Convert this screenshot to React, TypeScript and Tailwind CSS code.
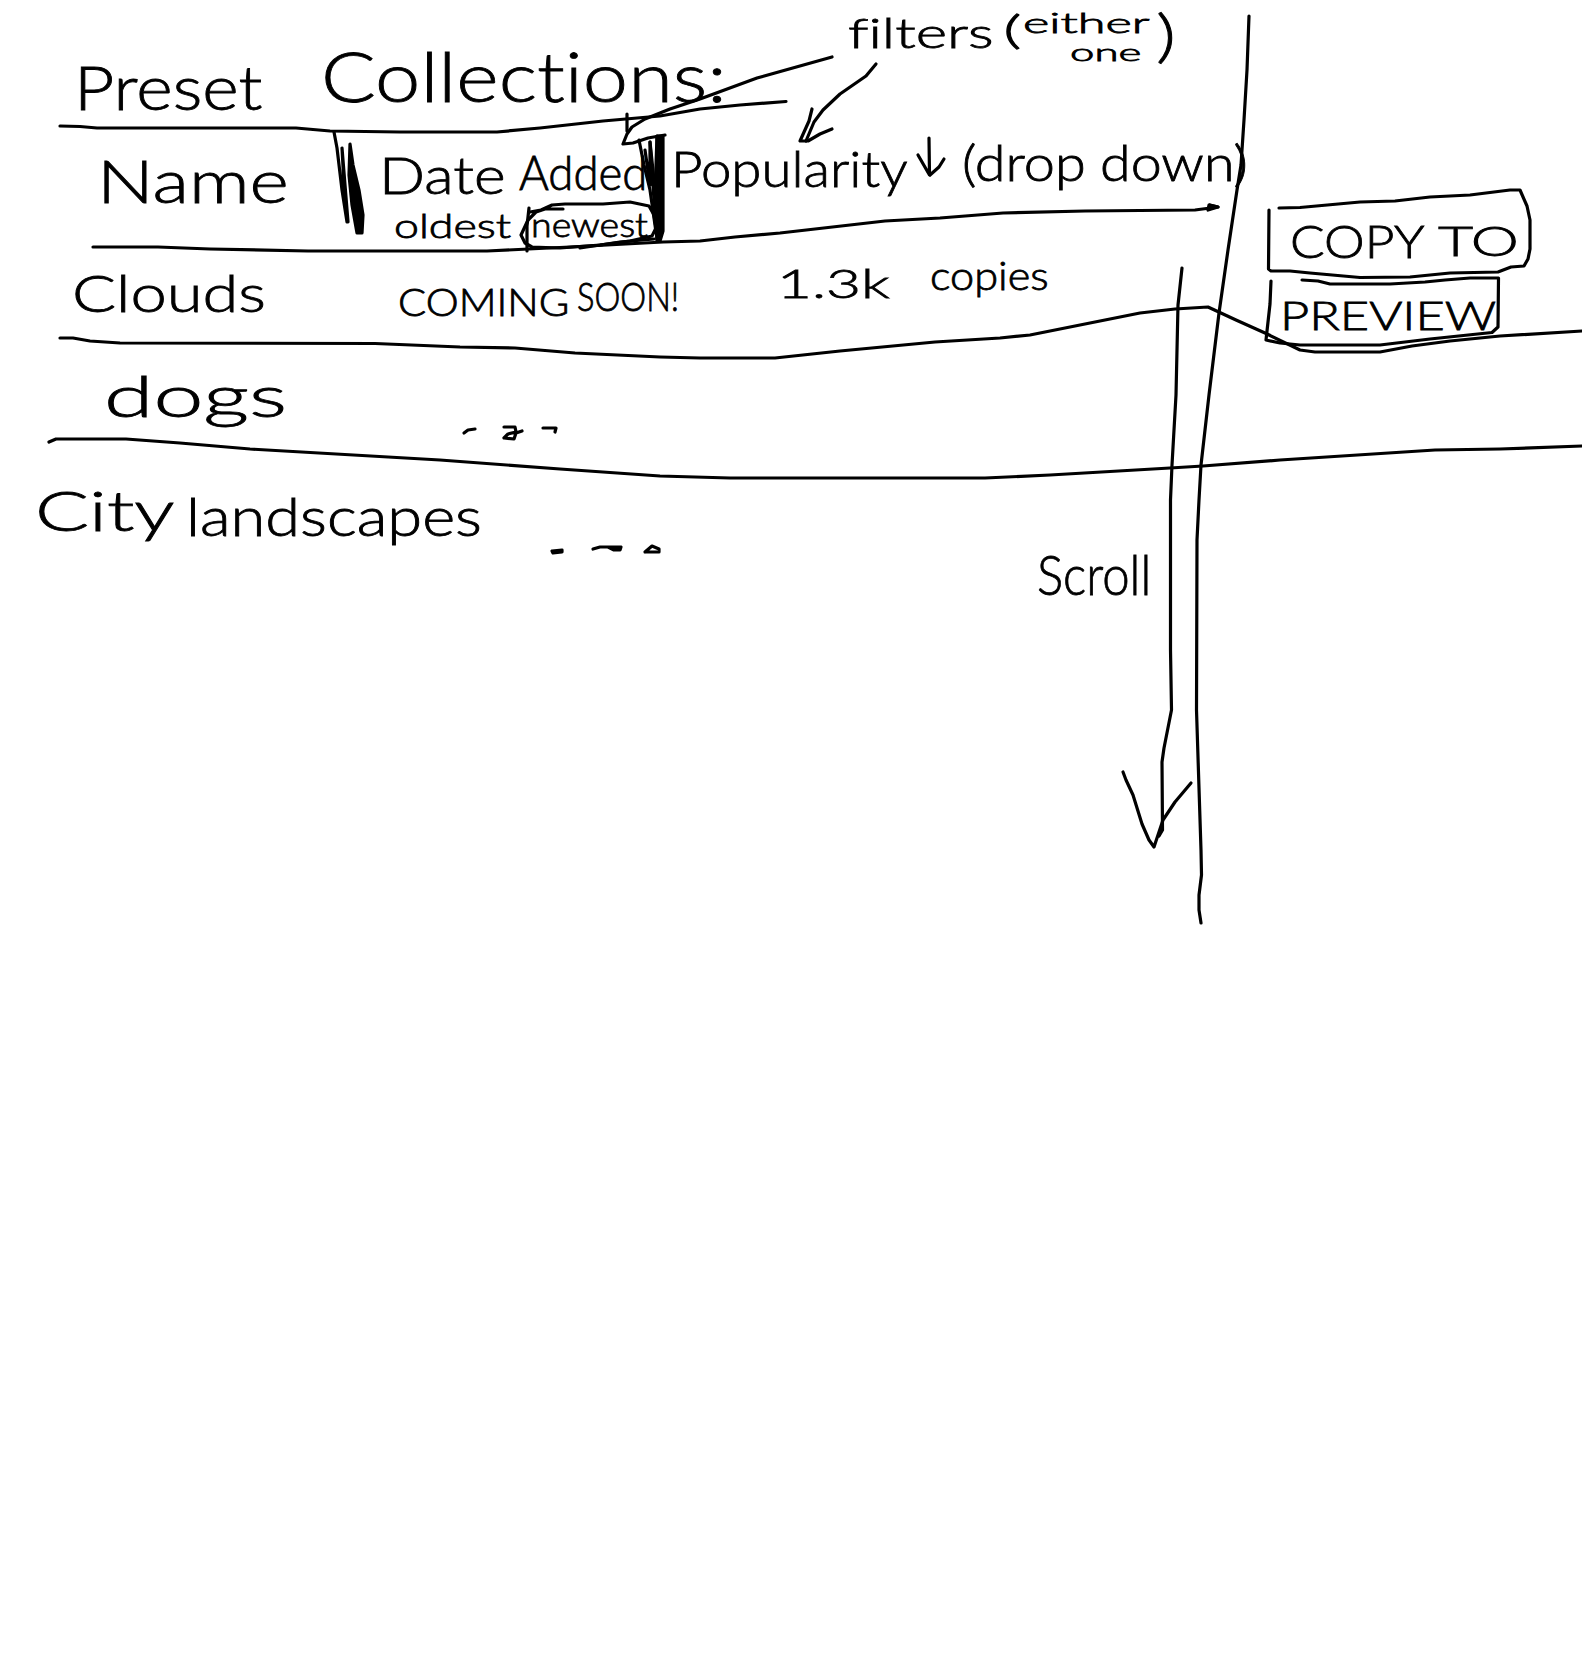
import { useLayoutEffect, useRef, useState } from "react";

/** A word stretched horizontally to fill the box its className gives it. */
function Word({ text, className }: { text: string; className: string }) {
  const box = useRef<HTMLDivElement>(null);
  const ink = useRef<HTMLSpanElement>(null);
  const [scale, setScale] = useState(1);
  useLayoutEffect(() => {
    if (box.current && ink.current) {
      setScale(box.current.offsetWidth / ink.current.offsetWidth);
    }
  }, [text]);
  return (
    <div ref={box} className={`shrink-0 text-left leading-none whitespace-nowrap ${className}`}>
      <span
        ref={ink}
        className="inline-block origin-left align-top"
        style={{ transform: `scaleX(${scale})` }}
      >
        {text}
      </span>
    </div>
  );
}

const strokes = [
  // rules between the rows
  "60,126 80,126.5 97,128 296,128 330,131 400,132 497,132 540,128 603,121 660,116 700,109 740,105 786,101.5",
  "93,247 158,247 210,249 308,251 487,251 570,247 663,242 700,241 735,237 780,233 885,221 940,218 1003,213 1085,211 1195,210 1218,207 1210,205",
  "60,338 73,338 90,341 120,343 375,343.5 460,347 515,348 575,353 660,357 700,358 775,358 840,351 935,342 1000,338 1030,335 1075,326 1140,313 1175,309 1208,307 1236,320 1265,333 1300,350 1315,352 1380,352 1412,346 1450,341 1500,336 1582,331",
  "49,442 56,439 126,439 180,443 250,449 440,460 560,469 660,476 730,478 985,478 1050,475 1170,468 1203,466 1280,460 1435,450 1500,449 1582,446",
  // panel divider
  "1249,16 1247,70 1244,120 1241,165 1237,190 1228,250 1219,313 1209,395 1201,465 1199,500 1197,540 1196.5,710 1198,757 1201,850 1201.5,875 1199,895 1199,910 1201,923",
  // scroll arrow
  "1182,268 1178,305 1176,395 1172,465 1170.5,500 1170.5,650 1171.5,710 1164,748 1162,762 1162.5,830 1159,836",
  "1123,772 1126,780 1133,795 1142,824 1149,840 1154,847 1163,820 1175,802 1191,783",
  // arrow to the date filter
  "832,57 757,78 700,99 670,109 645,119 632,127 627,134 623,144 633,143 648,138 665,135",
  "627,114 627,131",
  // arrow to the popularity filter
  "876,64 866,76 840,94 823,110 814,122 806,141",
  "812,109 809,121 800,141 808,141 820,134 832,129",
  // drop-down arrow
  "929,138 929.5,175 918,155",
  "930,175 939,167 944,159",
  // left column bar
  "334,132 337,148 342,190 347,222 344,185 342,148 348,222",
  // right column bar
  "639,140 644,165 650,190 656,232",
  "645,150 650,185 650,142 654,200 657,240",
  "650,142 655,190 658,240 657,136",
  // ring round the selected order
  "563,209 545,209 536,212 528,220 521,235 525,243 532,247 560,248 600,245 630,241 652,236 656,228 654,215 649,206 630,202 603,204 565,204 552,205 541,210 530,212",
  "529,208 527,226 527,251",
  "580,248 620,242 654,239",
  // copy button frame
  "1269,210 1268.5,269 1271,271 1290,271 1310,273 1360,277.5 1410,277 1450,273 1498,272 1511,267 1524,266 1528,259 1530,249 1530,220 1527,206 1520,190 1510,190 1470,195 1430,197 1395,201 1360,202 1300,207.5 1279,208",
  // preview button frame
  "1271,281 1270,304 1266,340 1280,343 1300,345 1380,345 1430,339 1492,332.5 1498,327 1498.5,278 1470,278 1445,280 1425,282 1390,284 1330,284 1318,281 1302,280",
  // trailing marks
  "464,433 468,430 475,429",
  "504,427 515,427 516,432 508,434 504,438 514,439 516,433 522,431",
  "543,428 556,428 555,432",
  "593,549 600,547 608,547 614,550 620,550 621,547 608,547",
  "645,552 659,552 659,549 652,546 645,552",
];

export default function App() {
  return (
    <main className="relative flex h-[1680px] w-[1582px] overflow-hidden bg-white font-['Lato',sans-serif] font-light text-black [-webkit-text-stroke:0.8px_#000] [font-variant-ligatures:none]">
      <section className="flex w-[1250px] shrink-0 flex-col">
        <header className="flex h-[128px] items-start">
          <Word text="Preset" className="mt-[55px] ml-[74px] w-[189px] text-[62px]" />
          <Word text="Collections:" className="mt-[42px] ml-[58px] w-[406px] text-[68px]" />
          <Word text="filters" className="mt-[11px] ml-[121px] w-[146px] text-[42px]" />
          <Word text="(" className="mt-[9px] ml-[9px] w-[18px] text-[40px]" />
          <div className="mt-[8px] ml-[2px] flex flex-col items-start">
            <Word text="either" className="w-[126px] text-[28px]" />
            <Word text="one" className="mt-[4px] ml-[47px] w-[71px] text-[24px]" />
          </div>
          <Word text=")" className="mt-[5px] ml-[7px] w-[20px] text-[58px]" />
        </header>

        <div className="flex h-[120px] items-start">
          <Word text="Name" className="mt-[22px] ml-[97px] w-[192px] text-[60px]" />
          <div className="ml-[90px] flex w-[278px] shrink-0 flex-col">
            <div className="flex h-[80px] items-start gap-[14px]">
              <Word text="Date" className="mt-[21px] w-[126px] text-[51px]" />
              <Word text="Added" className="mt-[21px] w-[128px] text-[47px]" />
            </div>
            <div className="flex items-start gap-[20px] pl-[15px]">
              <Word text="oldest" className="w-[117px] text-[34px]" />
              <Word text="newest" className="-mt-px w-[117px] text-[34px]" />
            </div>
          </div>
          <Word text="Popularity" className="mt-[15px] ml-[14px] w-[237px] text-[50px]" />
          <Word text="(drop" className="mt-[9px] ml-[54px] w-[124px] text-[50px]" />
          <Word text="down)" className="mt-[9px] ml-[14px] w-[148px] text-[50px]" />
        </div>

        <div className="flex h-[95px] items-start">
          <Word text="Clouds" className="mt-[18px] ml-[72px] w-[194px] text-[52px]" />
          <Word text="COMING" className="mt-[34px] ml-[132px] w-[171px] text-[38px]" />
          <Word text="SOON!" className="mt-[28px] ml-[8px] w-[102px] text-[40px]" />
          <Word text="1.3k" className="mt-[15px] ml-[98px] w-[113px] text-[40px]" />
          <Word text="copies" className="mt-[7px] ml-[40px] w-[119px] text-[40px]" />
        </div>

        <div className="flex h-[100px] items-start">
          <Word text="dogs" className="mt-[23px] ml-[104px] w-[184px] text-[58px]" />
        </div>

        <div className="flex items-start">
          <Word text="City" className="mt-[39px] ml-[35px] w-[140px] text-[56px]" />
          <Word text="landscapes" className="mt-[46px] ml-[11px] w-[296px] text-[54px]" />
          <Word text="Scroll" className="mt-[103px] ml-[555px] w-[114px] text-[56px]" />
        </div>
      </section>

      <aside className="flex grow flex-col items-start pt-[218px]">
        <button className="ml-[40px] flex h-[77px] items-start gap-[14px]">
          <Word text="COPY" className="w-[134px] text-[46px]" />
          <Word text="TO" className="mt-[1px] w-[81px] text-[42px]" />
        </button>
        <button className="ml-[30px] flex">
          <Word text="PREVIEW" className="w-[216px] text-[40px]" />
        </button>
      </aside>

      <svg
        className="pointer-events-none absolute inset-0"
        width="1582"
        height="1680"
        viewBox="0 0 1582 1680"
        fill="none"
        stroke="#000"
        strokeWidth="3.2"
        strokeLinecap="round"
        strokeLinejoin="round"
      >
        {strokes.map((points) => (
          <polyline key={points} points={points} />
        ))}
        <g fill="#000">
          <polygon points="350,144 353,165 359,190 363,215 362,233 357,233 352,205 349,175" />
          <polygon points="657,136 663,136 663,231 660,241 657,240 655,195" />
          <polygon points="552,551 562,550 562,552 553,553" />
          <polygon points="1209,205 1218,207 1208,210" />
        </g>
      </svg>
    </main>
  );
}
